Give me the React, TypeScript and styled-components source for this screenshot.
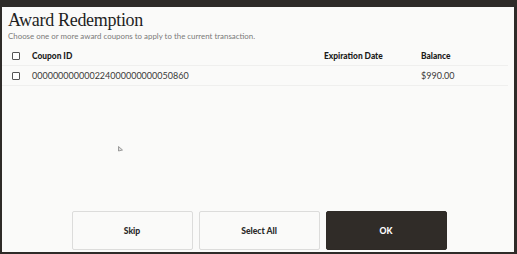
import styled, { createGlobalStyle } from "styled-components";

const GlobalStyle = createGlobalStyle`
  html, body {
    margin: 0;
    padding: 0;
    background: #2e2b28;
  }
`;

const Frame = styled.div`
  width: 517px;
  height: 254px;
  box-sizing: border-box;
  padding: 7px 3px 2px 2px;
  background: #2e2b28;
`;

const Panel = styled.div`
  position: relative;
  height: 100%;
  background: #fafaf9;
  display: flex;
  flex-direction: column;
  font-family: Lato, "Open Sans", sans-serif;
  color: #2a2a2a;
`;

const Title = styled.h1`
  margin: 3px 0 0 6px;
  font-family: "Liberation Serif", serif;
  font-weight: normal;
  font-size: 18px;
  letter-spacing: -0.3px;
  line-height: 21px;
  color: #1e1e1e;
`;

const Subtitle = styled.p`
  margin: 0 0 0 6px;
  font-size: 7.9px;
  line-height: 11px;
  color: #7a7a7a;
`;

const Table = styled.div`
  margin-top: 4px;
  display: flex;
  flex-direction: column;
  padding-right: 6px;
`;

const Row = styled.div<{ $header?: boolean }>`
  display: grid;
  grid-template-columns: 20px 292px 97px 1fr;
  align-items: center;
  height: 19px;
  padding-left: 10px;
  border-bottom: 1px solid #efefee;
  font-size: ${({ $header }) => ($header ? "8.4px" : "9px")};
  font-weight: ${({ $header }) => ($header ? 900 : 400)};
  color: ${({ $header }) => ($header ? "#1a1a1a" : "#3a3a3a")};
`;

const Box = styled.span`
  display: block;
  width: 6px;
  height: 6px;
  border: 1px solid #555;
  border-radius: 1px;
  background: #fff;
`;

const Buttons = styled.div`
  margin-top: auto;
  display: flex;
  justify-content: center;
  gap: 6px;
  padding: 0 0 2px 2px;
`;

const Button = styled.button<{ $primary?: boolean }>`
  width: 121px;
  height: 39px;
  box-sizing: border-box;
  border-radius: 2px;
  border: 1px solid ${({ $primary }) => ($primary ? "#2f2b27" : "#dcdcdb")};
  background: ${({ $primary }) => ($primary ? "#302c28" : "#fafaf9")};
  color: ${({ $primary }) => ($primary ? "#fff" : "#2a2a2a")};
  font-family: Lato, "Open Sans", sans-serif;
  font-weight: 900;
  font-size: 8.6px;
  padding: 0;
`;

const Pointer = styled.svg`
  position: absolute;
  left: 116px;
  top: 139px;
`;

export default function App() {
  return (
    <>
      <GlobalStyle />
      <Frame>
        <Panel>
          <Title>Award Redemption</Title>
          <Subtitle>Choose one or more award coupons to apply to the current transaction.</Subtitle>
          <Table>
            <Row $header>
              <Box />
              <span>Coupon ID</span>
              <span>Expiration Date</span>
              <span>Balance</span>
            </Row>
            <Row>
              <Box />
              <span>000000000000224000000000050860</span>
              <span></span>
              <span>$990.00</span>
            </Row>
          </Table>
          <Buttons>
            <Button>Skip</Button>
            <Button>Select All</Button>
            <Button $primary>OK</Button>
          </Buttons>
          <Pointer width="5" height="6" viewBox="0 0 5 6">
            <path d="M0.5 0.5 L0.5 5 L4.5 4 Z" fill="#ddd" stroke="#888" strokeWidth="0.8" />
          </Pointer>
        </Panel>
      </Frame>
    </>
  );
}
